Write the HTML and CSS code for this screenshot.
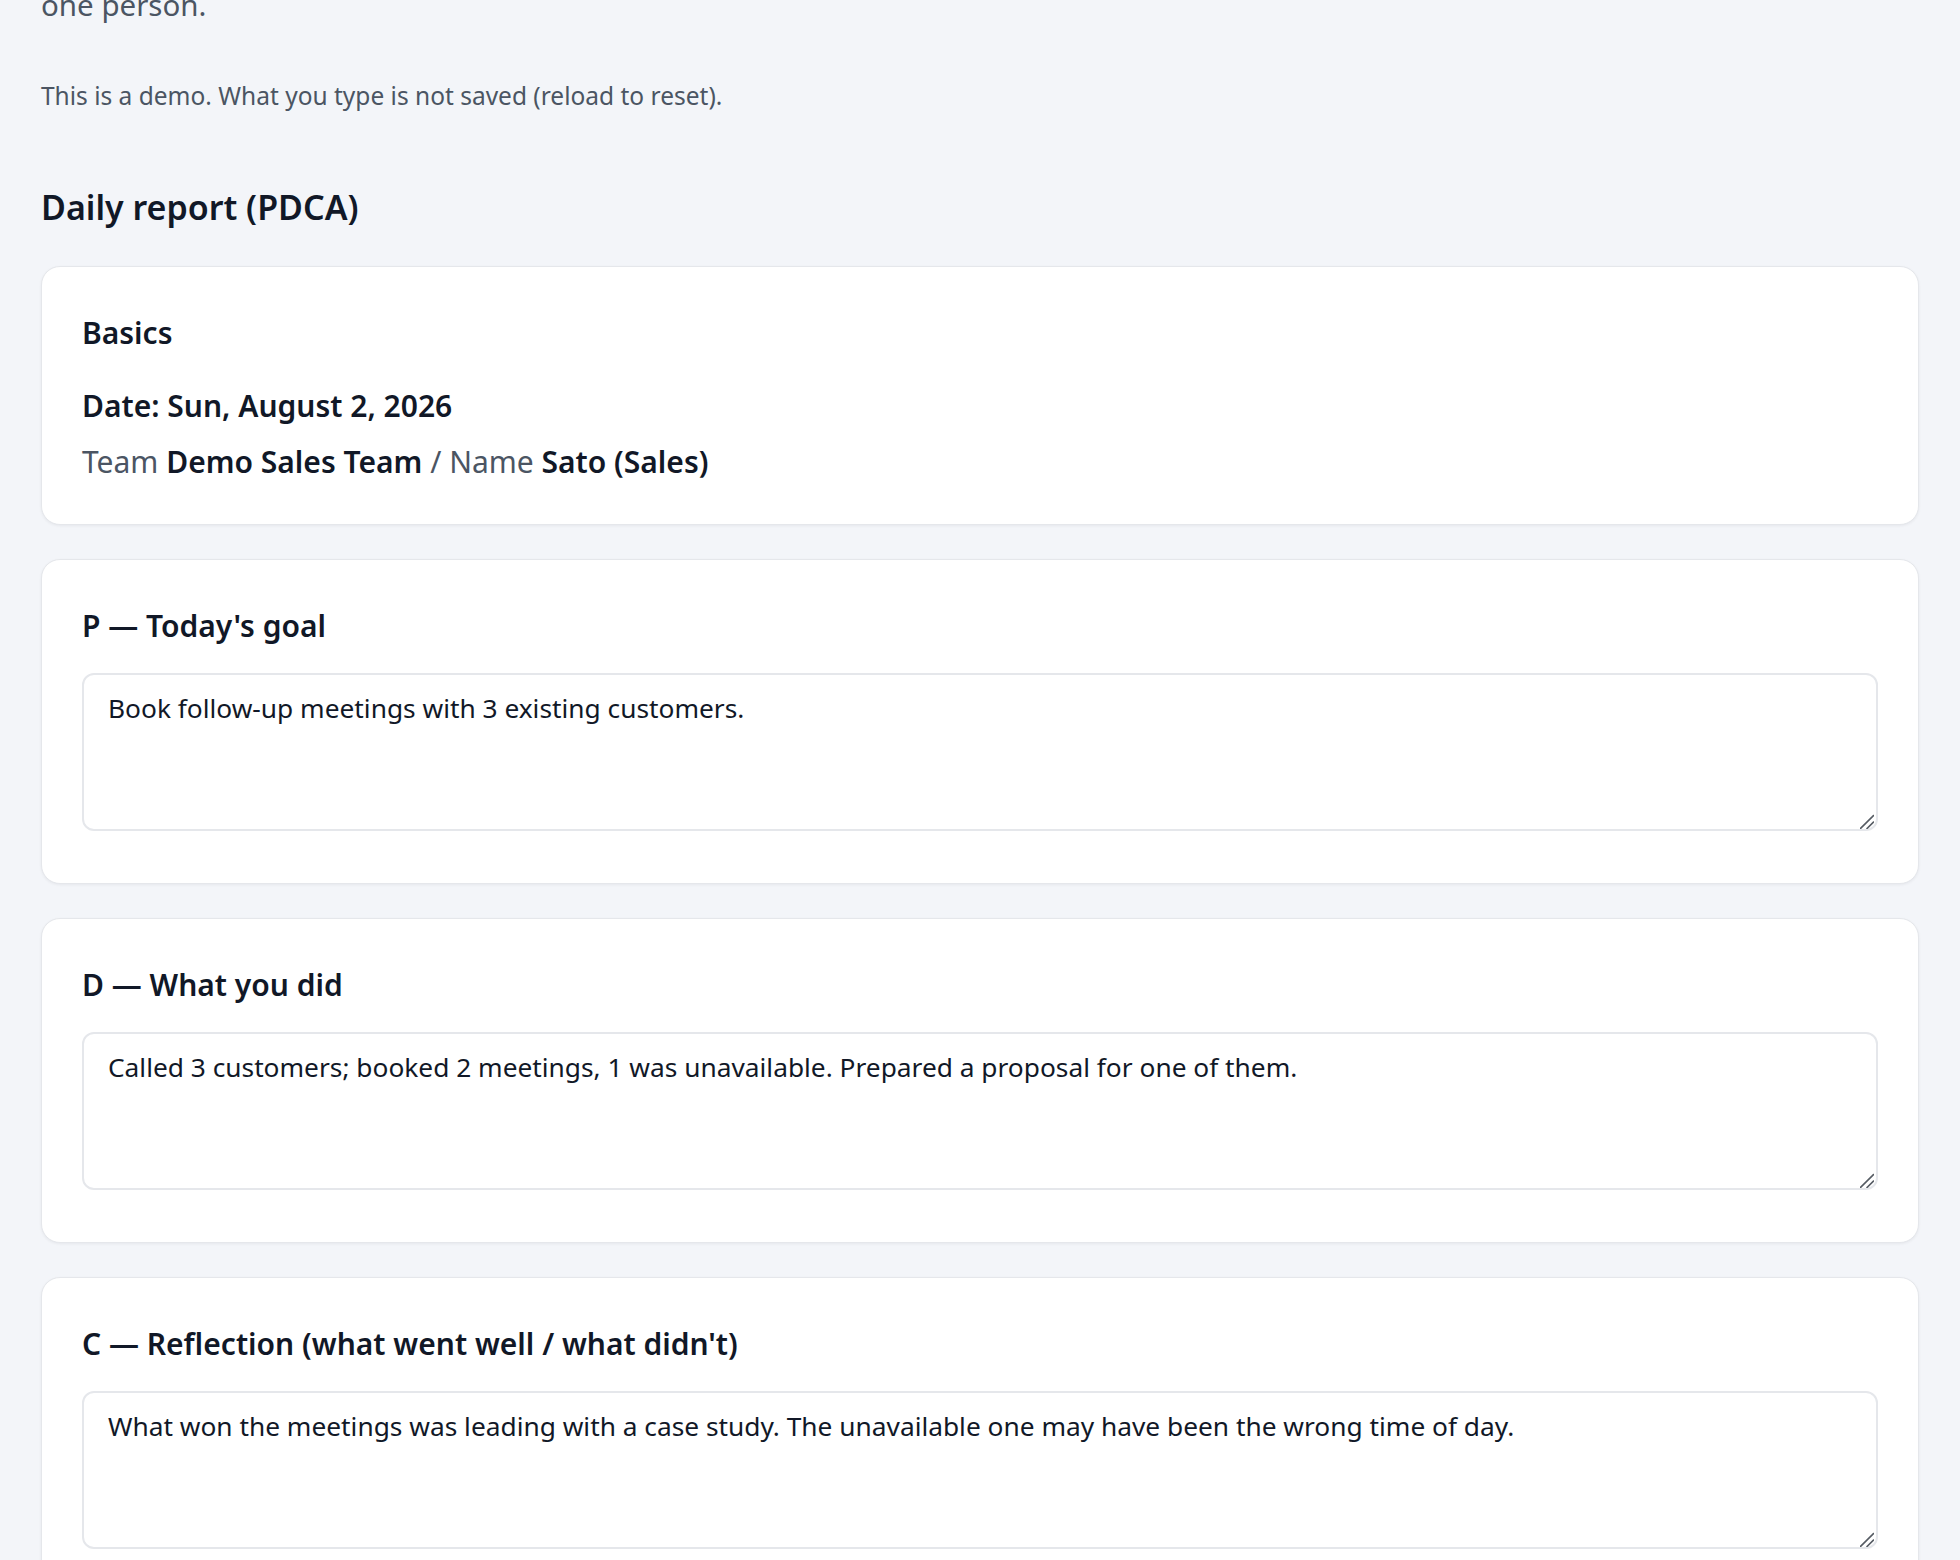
FILE: index.html
```html
<!DOCTYPE html>
<html lang="en">
<head>
<meta charset="utf-8">
<title>Daily report (PDCA)</title>
<link rel="stylesheet" href="styles.css">
</head>
<body>
<main class="page">
  <p class="lead">one person.</p>
  <p class="note">This is a demo. What you type is not saved (reload to reset).</p>
  <h2 class="page-title">Daily report (PDCA)</h2>
  <div class="cards">
    <section class="card">
      <h3 class="card-title">Basics</h3>
      <p class="date">Date: Sun, August 2, 2026</p>
      <p class="meta"><span class="muted">Team</span> <strong>Demo Sales Team</strong> <span class="muted">/ Name</span> <strong>Sato (Sales)</strong></p>
    </section>
    <section class="card">
      <h3 class="card-title">P — Today's goal</h3>
      <div class="field-wrap">
        <textarea class="field">Book follow-up meetings with 3 existing customers.</textarea>
        <svg class="grip" viewBox="0 0 14 15" width="14" height="15" aria-hidden="true"><path d="M0.5 14.5 L13.5 1.5 M7 14.5 L13.5 8" fill="none" stroke="#555b63" stroke-width="1.6" stroke-linecap="round"/></svg>
      </div>
    </section>
    <section class="card">
      <h3 class="card-title">D — What you did</h3>
      <div class="field-wrap">
        <textarea class="field">Called 3 customers; booked 2 meetings, 1 was unavailable. Prepared a proposal for one of them.</textarea>
        <svg class="grip" viewBox="0 0 14 15" width="14" height="15" aria-hidden="true"><path d="M0.5 14.5 L13.5 1.5 M7 14.5 L13.5 8" fill="none" stroke="#555b63" stroke-width="1.6" stroke-linecap="round"/></svg>
      </div>
    </section>
    <section class="card">
      <h3 class="card-title">C — Reflection (what went well / what didn't)</h3>
      <div class="field-wrap">
        <textarea class="field">What won the meetings was leading with a case study. The unavailable one may have been the wrong time of day.</textarea>
        <svg class="grip" viewBox="0 0 14 15" width="14" height="15" aria-hidden="true"><path d="M0.5 14.5 L13.5 1.5 M7 14.5 L13.5 8" fill="none" stroke="#555b63" stroke-width="1.6" stroke-linecap="round"/></svg>
      </div>
    </section>
  </div>
</main>
</body>
</html>
```

FILE: styles.css
```css
html, body {
  margin: 0;
  padding: 0;
  background: #f3f5f9;
  overflow: hidden;
}
body {
  font-family: "Noto Sans", "Open Sans", sans-serif;
  color: #111827;
}
.page {
  padding: 0 41px;
}
.lead {
  margin: -18px 0 0;
  font-size: 29.5px;
  line-height: 45px;
  color: #4b5563;
}
.note {
  margin: 52px 0 0;
  font-size: 24.5px;
  line-height: 33px;
  color: #4b5563;
}
.page-title {
  margin: 73px 0 0;
  font-size: 34px;
  line-height: 44px;
  font-weight: 600;
  color: #111827;
}
.cards {
  margin-top: 37px;
  display: flex;
  flex-direction: column;
  gap: 34px;
}
.card {
  background: #ffffff;
  border: 1px solid #e5e7eb;
  border-radius: 19px;
  padding: 43px 40px 40px;
  box-shadow: 0 1px 3px rgba(17, 24, 39, 0.06);
}
.card-title {
  margin: 0 0 25px;
  font-size: 30px;
  line-height: 45px;
  font-weight: 600;
  color: #111827;
}
.date {
  margin: 0;
  font-size: 30px;
  line-height: 45px;
  font-weight: 600;
}
.card-title + .date {
  margin-top: 28px;
}
.meta {
  margin: 11px 0 0;
  font-size: 30px;
  line-height: 45px;
}
.meta strong {
  font-weight: 600;
  color: #111827;
}
.muted {
  color: #4b5563;
}
.field-wrap {
  position: relative;
  margin: 0 0 12px;
}
.field {
  display: block;
  box-sizing: border-box;
  width: 100%;
  height: 158px;
  margin: 0;
  padding: 14px 24px;
  border: 2px solid #e5e7eb;
  border-radius: 12px;
  background: #ffffff;
  font-family: "Noto Sans", "Open Sans", sans-serif;
  font-size: 26.3px;
  line-height: 39px;
  color: #111827;
  resize: none;
}
.grip {
  position: absolute;
  right: 4px;
  bottom: 2px;
  pointer-events: none;
}
```
